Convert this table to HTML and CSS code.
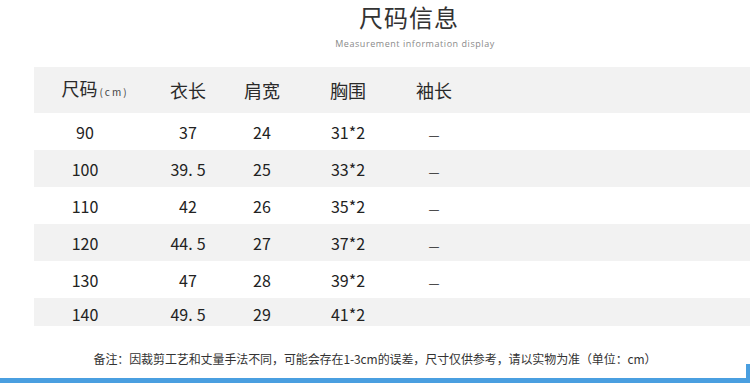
FILE: index.html
```html
<!DOCTYPE html>
<html lang="zh">
<head>
<meta charset="utf-8">
<title>尺码信息</title>
<link rel="stylesheet" href="styles.css">
</head>
<body>
<div class="page">
  <header class="heading">
    <h1 class="title">尺码信息</h1>
    <p class="subtitle">Measurement information display</p>
  </header>
  <section class="table">
    <div class="row head">
      <div class="cell c1 first-head"><span>尺码</span><small>(cm)</small></div>
      <div class="cell c2">衣长</div>
      <div class="cell c3">肩宽</div>
      <div class="cell c4">胸围</div>
      <div class="cell c5">袖长</div>
    </div>
    <div class="row">
      <div class="cell c1">90</div><div class="cell c2">37</div><div class="cell c3">24</div><div class="cell c4">31*2</div><div class="cell c5 dash">—</div>
    </div>
    <div class="row alt">
      <div class="cell c1">100</div><div class="cell c2">39<span class="dot">.</span>5</div><div class="cell c3">25</div><div class="cell c4">33*2</div><div class="cell c5 dash">—</div>
    </div>
    <div class="row">
      <div class="cell c1">110</div><div class="cell c2">42</div><div class="cell c3">26</div><div class="cell c4">35*2</div><div class="cell c5 dash">—</div>
    </div>
    <div class="row alt">
      <div class="cell c1">120</div><div class="cell c2">44<span class="dot">.</span>5</div><div class="cell c3">27</div><div class="cell c4">37*2</div><div class="cell c5 dash">—</div>
    </div>
    <div class="row">
      <div class="cell c1">130</div><div class="cell c2">47</div><div class="cell c3">28</div><div class="cell c4">39*2</div><div class="cell c5 dash">—</div>
    </div>
    <div class="row alt last">
      <div class="cell c1">140</div><div class="cell c2">49<span class="dot">.</span>5</div><div class="cell c3">29</div><div class="cell c4">41*2</div><div class="cell c5"></div>
    </div>
  </section>
  <footer class="note">
    <p class="note-text">备注：因裁剪工艺和丈量手法不同，可能会存在1-3cm的误差，尺寸仅供参考，请以实物为准（单位：cm）</p>
    <div class="bar"></div>
  </footer>
</div>
</body>
</html>
```

FILE: styles.css
```css
html, body {
  margin: 0;
  padding: 0;
  background: #ffffff;
}
body {
  font-family: "Noto Sans CJK SC", "Noto Sans", sans-serif;
  color: #222;
  width: 750px;
  height: 383px;
  overflow: hidden;
}
.page {
  display: flex;
  flex-direction: column;
  width: 750px;
  height: 383px;
}
.heading {
  padding-left: 68px;
  padding-top: 2px;
  display: flex;
  flex-direction: column;
  align-items: center;
}
.title {
  margin: 0;
  font-size: 24px;
  line-height: 30px;
  font-weight: 400;
  color: #333;
  letter-spacing: 1px;
}
.subtitle {
  margin: 6px 0 0 12px;
  font-family: "Open Sans", "Noto Sans", sans-serif;
  font-size: 9px;
  line-height: 12px;
  color: #8a8a8a;
  letter-spacing: 0.55px;
}
.table {
  margin-top: 17px;
  margin-left: 34px;
  display: flex;
  flex-direction: column;
}
.row {
  display: grid;
  grid-template-columns: 102px 104px 44px 128px 44px 1fr;
  height: 37px;
  align-items: center;
  background: #ffffff;
}
.row.alt { background: #f2f2f2; }
.row.head {
  height: 46px;
  background: #f2f2f2;
  font-size: 18px;
  color: #2a2a2a;
}
.row.last { height: 28px; align-items: end; }
.row.last .cell { line-height: 24px; }
.cell {
  display: flex;
  justify-content: center;
  align-items: center;
  white-space: nowrap;
  font-size: 16px;
  line-height: 20px;
}
.head .cell { font-size: 18px; }
.first-head {
  padding-left: 20px;
  align-items: baseline;
}
.first-head small {
  font-size: 10px;
  color: #444;
  letter-spacing: 2px;
  margin-left: 2px;
}
.dot { margin-right: 4px; }
.dash {
  font-family: "DejaVu Sans", sans-serif;
  font-size: 11px;
  color: #1a1a1a;
  padding-top: 8px;
}
.note {
  flex: 1;
  display: flex;
  flex-direction: column;
  justify-content: flex-end;
}
.note-text {
  margin: 0 0 11px 0;
  text-align: center;
  font-size: 12px;
  line-height: 16px;
  letter-spacing: -0.1px;
  color: #333;
}
.bar {
  position: relative;
  height: 5px;
  background: #4a9fe0;
}
.bar::after {
  content: "";
  position: absolute;
  right: 0;
  bottom: 0;
  width: 4px;
  height: 19px;
  background: #4a9fe0;
}
```
